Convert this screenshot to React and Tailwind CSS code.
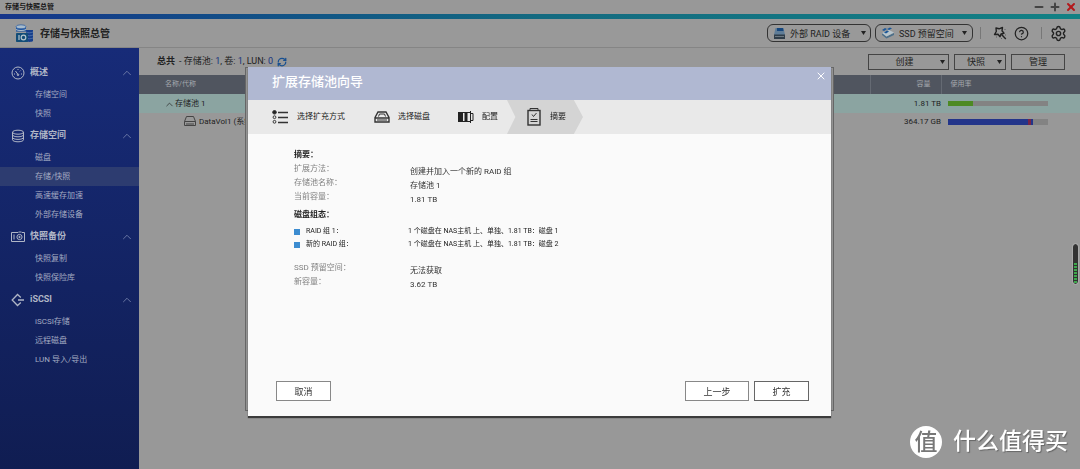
import { ChevronUp, CircleHelp, Minus, Plus, RefreshCw, Settings, X } from 'lucide-react';

const NAV = [
  { id: 'overview', label: '概述', icon: 'gauge', items: ['存储空间', '快照'] },
  { id: 'storage', label: '存储空间', icon: 'disks', items: ['磁盘', '存储/快照', '高速缓存加速', '外部存储设备'] },
  { id: 'backup', label: '快照备份', icon: 'snapshot', items: ['快照复制', '快照保险库'] },
  { id: 'iscsi', label: 'iSCSI', icon: 'iscsi', items: ['iSCSI存储', '远程磁盘', 'LUN 导入/导出'] },
];

const SUMMARY = [
  ['扩展方法：', '创建并加入一个新的 RAID 组'],
  ['存储池名称：', '存储池 1'],
  ['当前容量：', '1.81 TB'],
];

const DISKS = [
  ['RAID 组 1：', '1 个磁盘在 NAS主机 上、单独、1.81 TB：磁盘 1'],
  ['新的 RAID 组：', '1 个磁盘在 NAS主机 上、单独、1.81 TB：磁盘 2'],
];

const RESULT = [
  ['SSD 预留空间：', '无法获取'],
  ['新容量：', '3.62 TB'],
];

const navIcons = {
  gauge: <svg width="14" height="14" viewBox="0 0 14 14" fill="none" stroke="currentColor"><circle cx="7" cy="7" r="6"/><path d="M7 8.5 4.5 5M3 8h1M10 8h1M7 3v1M9.6 4.6l-.7.7"/><circle cx="7" cy="8.8" r=".8"/></svg>,
  disks: <svg width="14" height="14" viewBox="0 0 14 14" fill="none" stroke="currentColor"><ellipse cx="7" cy="3.2" rx="5.5" ry="2"/><path d="M1.5 3.2v7.6c0 1.1 2.5 2 5.5 2s5.5-.9 5.5-2V3.2M1.5 5.8c0 1.1 2.5 2 5.5 2s5.5-.9 5.5-2M1.5 8.4c0 1.1 2.5 2 5.5 2s5.5-.9 5.5-2"/></svg>,
  snapshot: <svg width="14" height="14" viewBox="0 0 14 14" fill="none" stroke="currentColor"><path d="M.5 2.500H7l.5-.5h3l.5.5h2.500v9H.5zM3 4.500v5"/><circle cx="8.5" cy="7" r="2.6"/><circle cx="8.5" cy="7" r=".7" fill="currentColor"/></svg>,
  iscsi: <svg width="14" height="14" viewBox="0 0 14 14" fill="none" stroke="currentColor" strokeWidth="1.3"><path d="M9.8 4.5 6.5 1.5 1.2 7l5.3 5.5 3.3-3M7 7h6"/></svg>,
};

function AppLogo() {
  return (
    <svg width="19" height="19" viewBox="0 0 19 19">
      <path d="M11 6h7v11c-1.5 1.2-5.5 1.2-7 0z" fill="#173f8c" />
      <path d="M11 8c2 1 5 1 7 0M11 11c2 1 5 1 7 0M11 14c2 1 5 1 7 0" fill="none" stroke="#6f8fb8" strokeWidth=".6" />
      <path d="M1 2.6v5h10v-5z" fill="#23569f" />
      <ellipse cx="6" cy="2.8" rx="5" ry="2" fill="#a9bccb" stroke="#23569f" strokeWidth=".7" />
      <path d="M1 5.5c1.5 1.4 8.5 1.4 10 0" fill="none" stroke="#a9bccb" />
      <rect x="1" y="9" width="12" height="9" rx=".8" fill="#134d78" />
      <path d="M4 11v5" stroke="#b5c5cd" strokeWidth="1.2" />
      <circle cx="8.5" cy="13.5" r="2.3" fill="none" stroke="#b5c5cd" strokeWidth="1.2" />
    </svg>
  );
}

function Caret() {
  return <svg width="5" height="4" viewBox="0 0 5 4" className="shrink-0"><path d="M0 0h5L2.5 4z" fill="#222" /></svg>;
}

function TitleBar() {
  return (
    <div className="h-[14px] bg-[#989898] flex items-center pl-[5px] pr-[3px] text-[7px] font-bold text-[#161616]">
      <span className="flex-1">存储与快照总管</span>
      <div className="flex gap-1">
        <button aria-label="最小化" className="text-[#444]"><Minus size={12} strokeWidth={4} /></button>
        <button aria-label="最大化" className="text-[#444]"><Plus size={12} strokeWidth={4} /></button>
        <button aria-label="关闭" className="text-[#b3191c]"><X size={12} strokeWidth={4} /></button>
      </div>
    </div>
  );
}

function Header() {
  return (
    <header className="h-[29px] bg-[#999] border-b border-[#858585] flex items-center pl-[15px] pr-[13px] text-[#222]">
      <AppLogo />
      <h1 className="ml-[6px] flex-1 text-[10px] font-bold">存储与快照总管</h1>
      <button className="h-[18px] w-[104px] rounded-md border border-[#333] flex items-center pl-[5px] pr-1 text-[9px]">
        <svg width="13" height="13" viewBox="0 0 13 13"><path d="M2.5 1h8L12 8H1z" fill="#5f7d98" /><path d="M4 1h6l.6 3H4z" fill="#15467d" /><path d="M1 7.5h11V12H1z" fill="#2f3d49" /><path d="M2 9.5h9" stroke="#6d7982" /></svg>
        <span className="flex-1 pl-1 pt-[3px] text-left whitespace-nowrap">外部 RAID 设备</span>
        <Caret />
      </button>
      <button className="ml-1 h-[18px] w-[98px] rounded-md border border-[#333] flex items-center pl-[5px] pr-[5px] text-[9px]">
        <svg width="14" height="13" viewBox="0 0 14 13"><path d="M1 8l4.5 3.5L13 8V6L5.5 9.5 1 6z" fill="#4c6f8a" /><path d="M1 6l7-3 5 2.5-7.5 4z" fill="#b7c5cd" /><path d="M1 3l3-2 2 1-3 2zM6 2l3-1.5 2 1L8 3zM3 5.5l3-2 2 1-3 2z" fill="#1b5798" /></svg>
        <span className="flex-1 pl-1 pt-[3px] text-left whitespace-nowrap">SSD 预留空间</span>
        <Caret />
      </button>
      <span className="ml-[7px] h-[12px] w-px bg-[#777]" />
      <button aria-label="向导" className="ml-3">
        <svg width="14" height="14" viewBox="0 0 14 14" fill="none" stroke="currentColor" strokeWidth="1.4" strokeLinejoin="round"><path d="M3 2l3 .8L9.500 1.500 9 4.800l2 2.400-3 .8-1 2.700L5 8.300l-3.500.2 1.800-3zM8.800 8.800l4 4.200" /><path d="M12 3v1M12.500 8.500v1M3 11h1M8.500 12v1" strokeWidth="1" opacity=".5" /></svg>
      </button>
      <button aria-label="帮助" className="ml-[7px]"><CircleHelp size={15} strokeWidth={2} /></button>
      <span className="ml-[12px] h-[12px] w-px bg-[#777]" />
      <button aria-label="设置" className="ml-2"><Settings size={17} strokeWidth={2} /></button>
    </header>
  );
}

function Sidebar() {
  return (
    <nav className="w-[139px] shrink-0 pt-3 bg-linear-to-b from-[#172b78] to-[#101d52] text-[#a3abc2]">
      {NAV.map((group) => (
        <div key={group.id}>
          <button className="h-[25px] w-full flex items-center pl-[11px] pr-[5px] text-[9px] font-bold text-[#b0b6c6]">
            {navIcons[group.icon]}
            <span className="ml-[5px] flex-1 text-left">{group.label}</span>
            <ChevronUp size={14} strokeWidth={1.5} className="text-[#7380ac]" />
          </button>
          {group.items.map((item) => (
            <a key={item} href="#" className={'h-[19px] flex items-center pl-[35px] text-[8px] ' + (item === '存储/快照' ? 'bg-[#2d3c70]' : '')}>{item}</a>
          ))}
        </div>
      ))}
    </nav>
  );
}

function StoragePage() {
  return (
    <main className="flex-1 min-w-0 bg-[#989898] text-[#222]">
      <div className="h-[27px] flex items-center pl-[18px] pr-[15px] gap-[5px] text-[9px]">
        <div className="flex-1 flex items-center pt-px">
          <b>总共</b>
          <span className="ml-1">- 存储池: <a href="#" className="text-[#17327e]">1</a>, 卷: <a href="#" className="text-[#17327e]">1</a>, LUN: <a href="#" className="text-[#17327e]">0</a></span>
          <button aria-label="刷新" className="ml-1 text-[#174f91]"><RefreshCw size={10} strokeWidth={3} /></button>
        </div>
        <button className="h-4 w-[81px] border border-[#444] flex items-center pr-[3px] leading-4"><span className="flex-1">创建</span><Caret /></button>
        <button className="h-4 w-[52px] border border-[#444] flex items-center pr-[3px] leading-4"><span className="flex-1">快照</span><Caret /></button>
        <button className="h-4 w-[54px] border border-[#444] leading-[14px]">管理</button>
      </div>
      <table className="w-full table-fixed text-[8px] leading-[18px]">
        <thead className="bg-[#50555f] text-[7px] leading-[17px] text-[#a5a9ae]">
          <tr className="h-[19px]">
            <th className="pl-[26px] text-left font-normal">名称/代称</th>
            <th className="w-[71px] pr-[10px] text-right font-normal border-x border-[#656a73]">容量</th>
            <th className="w-[139px] pl-[9px] text-left font-normal">使用率</th>
          </tr>
        </thead>
        <tbody>
          <tr className="h-[18px] bg-[#8ba4a1]">
            <td className="pl-[25px]"><span className="flex items-center pt-px"><ChevronUp size={11} strokeWidth={1.5} />存储池 1</span></td>
            <td className="text-right">1.81 TB</td>
            <td className="pl-[7px]"><div className="h-[5px] w-[100px] bg-[#838383]"><div className="h-full w-1/4 bg-[#4d8a24]" /></div></td>
          </tr>
          <tr className="h-[18px]">
            <td className="pl-[45px]">
              <span className="flex items-start gap-[3px]">
                <svg width="12" height="10" viewBox="0 0 12 10" fill="none" stroke="#444"><path d="M.5 5.5 2.5.5h7l2 5v4H.5zM.5 5.5h11M3 7v2M5 7v2M7 7v2M9 7v2" /></svg>
                <span className="leading-3">DataVol1 (系统)</span>
              </span>
            </td>
            <td className="text-right">364.17 GB</td>
            <td className="pl-[7px]">
              <div className="h-[6px] w-[100px] bg-[#838383] flex"><div className="w-4/5 bg-[#23358a]" /><div className="w-[3px] bg-[#782448]" /><div className="w-[2px] bg-[#23358a]" /></div>
            </td>
          </tr>
        </tbody>
      </table>
    </main>
  );
}

function Steps() {
  return (
    <ol className="h-[34px] bg-[#e9e9e9] flex items-center pl-6 text-[8px] text-[#222]">
      <li className="flex items-center gap-2">
        <svg width="17" height="14" viewBox="0 0 17 14" fill="none" stroke="#333"><circle cx="2.5" cy="2.3" r="1.8" fill="#222" /><circle cx="2.5" cy="7.2" r="1.4" /><circle cx="2.5" cy="11.8" r="1.4" /><path d="M6 2.5h10M6 7.5h10M6 12.5h10" strokeWidth="1.5" /></svg>
        选择扩充方式
      </li>
      <li className="ml-[29px] flex items-center gap-2">
        <svg width="16" height="12" viewBox="0 0 16 12" fill="none" stroke="#333" strokeWidth="1.4"><path d="M1 6.5 4 1h8l3 5.5V11H1zM1 7h14" /><path d="M4.500 5.500l1-2.500h5l1 2.500M3 9h10" strokeWidth="1" /></svg>
        选择磁盘
      </li>
      <li className="ml-[28px] flex items-center gap-2">
        <svg width="16" height="12" viewBox="0 0 16 12" fill="none" stroke="#222"><rect x=".5" y="1.5" width="4" height="9" fill="#222" /><rect x="7" y="1.5" width="2" height="9" fill="#222" /><path d="M.5 1.5H12M.5 10.500H12M12.500 0v12M13 2.500h2v7h-2" /></svg>
        配置
      </li>
      <li aria-current="step" className="ml-[9px] h-full w-[76px] pl-5 flex items-center gap-[9px] bg-[#d4d4d4] [clip-path:polygon(0_0,88%_0,100%_50%,88%_100%,0_100%,11%_50%)]">
        <svg width="14" height="18" viewBox="0 0 14 18" fill="none" stroke="#333"><rect x="1" y="2.5" width="12" height="14.5" strokeWidth="1.4" /><path d="M3 2.500v-2h8v2M5 6.500 6.500 8.500 9.500 5M3.500 11.500h7M3.500 13.500h7" /></svg>
        摘要
      </li>
    </ol>
  );
}

function Fields({ rows }) {
  return (
    <dl className="grid grid-cols-[116px_1fr] auto-rows-[14px]">
      {rows.map(([name, value]) => (
        <div key={name} className="contents">
          <dt className="leading-[14px] text-[#828282]">{name}</dt>
          <dd className="pt-1 leading-3 text-[#333]">{value}</dd>
        </div>
      ))}
    </dl>
  );
}

function ExpandPoolDialog() {
  return (
    <div className="fixed inset-0 flex items-start justify-center pr-px pt-[67px]">
      <div className="relative w-full max-w-[583px]">
        {/* frame of the parent dialog underneath */}
        <div className="absolute -inset-x-[3px] top-0 bottom-[5px] border border-[#666] bg-[#929292]" />
        <section role="dialog" aria-labelledby="dialog-title" className="relative min-h-[349px] flex flex-col bg-[#fafafa] text-[8px] shadow-[0_2px_1px_#3c3c3c]">
          <div className="h-[33px] flex items-start bg-[#b0b8d2] pl-6 pr-1 pt-[3px] text-white">
            <h2 id="dialog-title" className="flex-1 text-[13px] leading-6 font-medium">扩展存储池向导</h2>
            <button aria-label="关闭"><X size={12} strokeWidth={2} /></button>
          </div>
          <Steps />
          <div className="pl-[46px] pr-4 pt-[14px] leading-[14px]">
            <h3 className="font-bold text-[#222]">摘要：</h3>
            <Fields rows={SUMMARY} />
            <h3 className="mt-1 font-bold text-[#222]">磁盘组态：</h3>
            <dl className="mt-[3px] mb-[10px] grid grid-cols-[114px_1fr] text-[7px] leading-[13px] text-[#222]">
              {DISKS.map(([name, value]) => (
                <div key={name} className="contents">
                  <dt className="flex items-center gap-[6px]"><span className="size-[6px] bg-[#3c8cd0]" />{name}</dt>
                  <dd>{value}</dd>
                </div>
              ))}
            </dl>
            <Fields rows={RESULT} />
          </div>
          <div className="mt-auto flex gap-[5px] pl-7 pr-[22px] pb-[15px] text-[9px] leading-5 text-[#333]">
            <button className="h-5 w-[55px] border border-[#888] bg-white">取消</button>
            <span className="flex-1" />
            <button className="h-5 w-[64px] border border-[#888] bg-white">上一步</button>
            <button className="h-5 w-[55px] border border-[#666] bg-white">扩充</button>
          </div>
        </section>
      </div>
    </div>
  );
}

export default function App() {
  return (
    <div className="min-h-screen flex flex-col font-[Roboto,'Noto_Sans_CJK_SC',sans-serif]">
      <TitleBar />
      <div className="h-[5px] bg-linear-to-r from-[#16358a] via-[#146a80] to-[#128184]" />
      <Header />
      <div className="flex-1 flex">
        <Sidebar />
        <StoragePage />
      </div>
      <ExpandPoolDialog />
      {/* resource meter docked to the screen edge */}
      <div className="fixed right-[2px] top-[244px] h-10 w-[5px] rounded-sm border border-[#333] bg-[#333] flex flex-col justify-end gap-px outline outline-[#aaa]">
        {Array.from({ length: 7 }, (_, i) => <span key={i} className="h-[2px] bg-[#3da84c]" />)}
      </div>
      <div className="fixed bottom-[11px] right-3 flex items-center gap-[11px] text-white">
        <span className="size-8 rounded-full bg-white grid place-items-center text-[23px] leading-none font-medium text-[#777]">值</span>
        <span className="text-[23px] leading-8 font-medium text-shadow-[1px_1px_1px_#666]">什么值得买</span>
      </div>
    </div>
  );
}
